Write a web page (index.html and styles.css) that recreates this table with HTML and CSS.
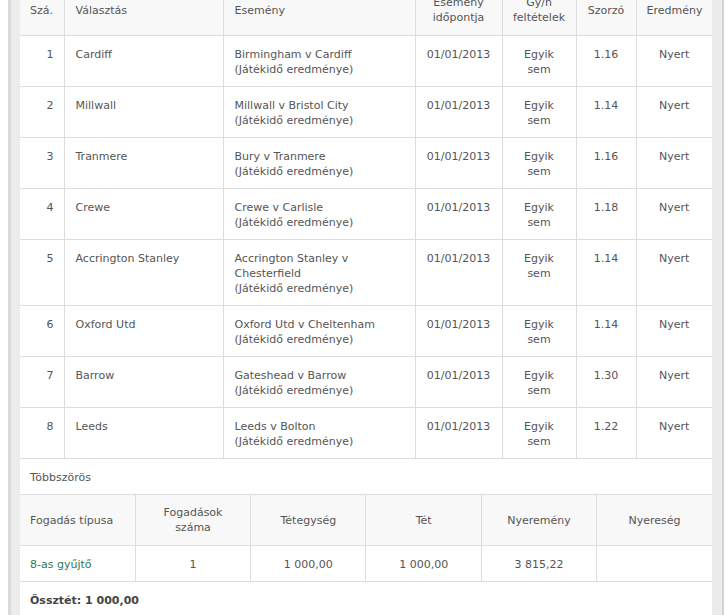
FILE: index.html
```html
<!DOCTYPE html>
<html lang="hu">
<head>
<meta charset="utf-8">
<title>Fogadás részletei</title>
<link rel="stylesheet" href="styles.css">
</head>
<body>
<div class="frame">
  <div class="panel">
    <table class="sel">
      <colgroup>
        <col class="c-num"><col class="c-pick"><col class="c-event"><col class="c-date"><col class="c-hc"><col class="c-odds"><col class="c-res">
      </colgroup>
      <thead>
        <tr>
          <th class="left">Szá.</th>
          <th class="left">Választás</th>
          <th class="left">Esemény</th>
          <th>Esemény<br>időpontja</th>
          <th>Gy/h<br>feltételek</th>
          <th>Szorzó</th>
          <th>Eredmény</th>
        </tr>
      </thead>
      <tbody>
        <tr><td class="num">1</td><td>Cardiff</td><td>Birmingham v Cardiff<br>(Játékidő eredménye)</td><td class="c">01/01/2013</td><td class="c">Egyik<br>sem</td><td class="c">1.16</td><td class="c">Nyert</td></tr>
        <tr><td class="num">2</td><td>Millwall</td><td>Millwall v Bristol City<br>(Játékidő eredménye)</td><td class="c">01/01/2013</td><td class="c">Egyik<br>sem</td><td class="c">1.14</td><td class="c">Nyert</td></tr>
        <tr><td class="num">3</td><td>Tranmere</td><td>Bury v Tranmere<br>(Játékidő eredménye)</td><td class="c">01/01/2013</td><td class="c">Egyik<br>sem</td><td class="c">1.16</td><td class="c">Nyert</td></tr>
        <tr><td class="num">4</td><td>Crewe</td><td>Crewe v Carlisle<br>(Játékidő eredménye)</td><td class="c">01/01/2013</td><td class="c">Egyik<br>sem</td><td class="c">1.18</td><td class="c">Nyert</td></tr>
        <tr><td class="num">5</td><td>Accrington Stanley</td><td>Accrington Stanley v<br>Chesterfield<br>(Játékidő eredménye)</td><td class="c">01/01/2013</td><td class="c">Egyik<br>sem</td><td class="c">1.14</td><td class="c">Nyert</td></tr>
        <tr><td class="num">6</td><td>Oxford Utd</td><td>Oxford Utd v Cheltenham<br>(Játékidő eredménye)</td><td class="c">01/01/2013</td><td class="c">Egyik<br>sem</td><td class="c">1.14</td><td class="c">Nyert</td></tr>
        <tr><td class="num">7</td><td>Barrow</td><td>Gateshead v Barrow<br>(Játékidő eredménye)</td><td class="c">01/01/2013</td><td class="c">Egyik<br>sem</td><td class="c">1.30</td><td class="c">Nyert</td></tr>
        <tr><td class="num">8</td><td>Leeds</td><td>Leeds v Bolton<br>(Játékidő eredménye)</td><td class="c">01/01/2013</td><td class="c">Egyik<br>sem</td><td class="c">1.22</td><td class="c">Nyert</td></tr>
      </tbody>
    </table>
    <div class="section">Többszörös</div>
    <table class="multi">
      <thead>
        <tr>
          <th class="left">Fogadás típusa</th>
          <th>Fogadások<br>száma</th>
          <th>Tétegység</th>
          <th>Tét</th>
          <th>Nyeremény</th>
          <th>Nyereség</th>
        </tr>
      </thead>
      <tbody>
        <tr>
          <td><a class="link" href="#">8-as gyűjtő</a></td>
          <td class="c">1</td>
          <td class="c">1 000,00</td>
          <td class="c">1 000,00</td>
          <td class="c">3 815,22</td>
          <td class="c"></td>
        </tr>
      </tbody>
    </table>
    <div class="total">Össztét: 1 000,00</div>
  </div>
</div>
</body>
</html>
```

FILE: styles.css
```css
html, body {
  margin: 0;
  padding: 0;
  background: #ffffff;
}
body {
  font-family: "DejaVu Sans", Verdana, sans-serif;
  font-size: 11px;
  line-height: 15px;
  color: #555555;
  overflow: hidden;
}
.frame {
  margin: -13px 0 0 8px;
  width: 716px;
  box-sizing: border-box;
  min-height: 640px;
  background: #ececec;
  border-left: 3px solid #dadada;
  border-right: 2px solid #d2d2d2;
  padding: 0 10px 0 9px;
}
.panel {
  background: #ffffff;
  min-height: 640px;
}
table {
  width: 100%;
  border-collapse: collapse;
  table-layout: fixed;
}
th {
  font-weight: normal;
  background: #f8f8f8;
  text-align: center;
  vertical-align: middle;
  padding: 8px 10px 10px;
}
td {
  vertical-align: top;
  padding: 11px 10px 9px;
}
th.left { text-align: left; }
td.c { text-align: center; }
td.num { text-align: right; }
.sel th, .sel td {
  border-bottom: 1px solid #dddddd;
  border-left: 1px solid #dddddd;
}
.sel th:first-child, .sel td:first-child { border-left: none; }
.c-num { width: 44px; }
.c-pick { width: 159px; }
.c-event { width: 192px; }
.c-date { width: 87px; }
.c-hc { width: 74px; }
.c-odds { width: 60px; }
.c-res { width: 76px; }
.sel th:nth-child(2), .sel td:nth-child(2),
.sel th:nth-child(3), .sel td:nth-child(3) { padding-left: 11px; }
.section {
  padding: 11px 10px 9px;
  border-bottom: 1px solid #dddddd;
}
.multi th {
  padding: 10px 10px;
}
.multi th, .multi td {
  border-bottom: 1px solid #dddddd;
  border-left: 1px solid #dddddd;
}
.multi th:first-child, .multi td:first-child { border-left: none; }
.multi td { height: 15px; }
.link {
  color: #2f7a55;
  text-decoration: none;
}
.total {
  padding: 11px 10px 9px;
  font-weight: bold;
  color: #444444;
}
```
